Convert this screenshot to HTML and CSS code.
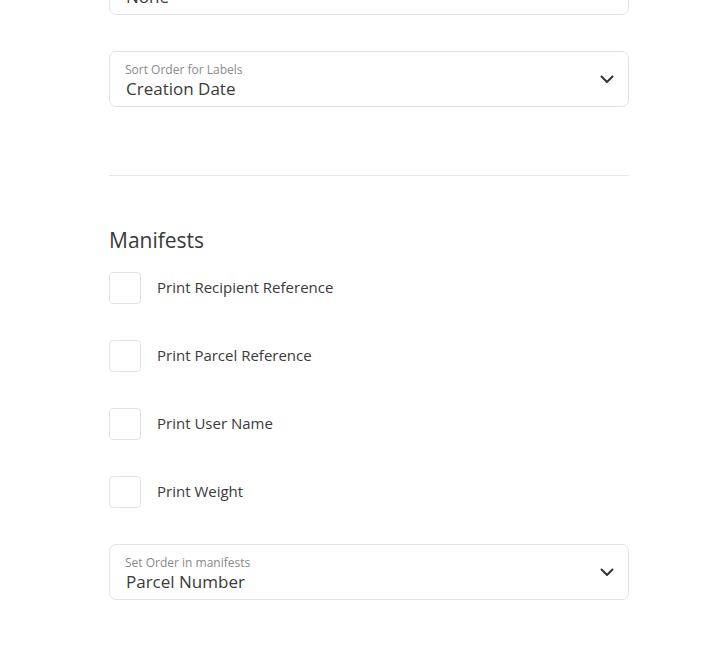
FILE: index.html
```html
<!DOCTYPE html>
<html>
<head>
<meta charset="utf-8">
<link rel="stylesheet" href="styles.css">
</head>
<body>
<div class="page">
  <div class="select select-top">
    <div class="select-text">
      <span class="select-label">Print Sequence</span>
      <span class="select-value">None</span>
    </div>
  </div>

  <div class="select select-sort">
    <div class="select-text">
      <span class="select-label">Sort Order for Labels</span>
      <span class="select-value">Creation Date</span>
    </div>
    <svg class="chevron" width="14" height="9" viewBox="0 0 14 9"><path d="M1.5 1.5 L7 7 L12.5 1.5" fill="none" stroke="#333" stroke-width="2" stroke-linecap="round" stroke-linejoin="round"/></svg>
  </div>

  <hr class="divider">

  <h2 class="section-title">Manifests</h2>

  <div class="checks">
    <label class="check-row"><span class="checkbox"></span><span class="check-text">Print Recipient Reference</span></label>
    <label class="check-row"><span class="checkbox"></span><span class="check-text">Print Parcel Reference</span></label>
    <label class="check-row"><span class="checkbox"></span><span class="check-text">Print User Name</span></label>
    <label class="check-row"><span class="checkbox"></span><span class="check-text">Print Weight</span></label>
  </div>

  <div class="select select-manifest">
    <div class="select-text">
      <span class="select-label">Set Order in manifests</span>
      <span class="select-value">Parcel Number</span>
    </div>
    <svg class="chevron" width="14" height="9" viewBox="0 0 14 9"><path d="M1.5 1.5 L7 7 L12.5 1.5" fill="none" stroke="#333" stroke-width="2" stroke-linecap="round" stroke-linejoin="round"/></svg>
  </div>
</div>
</body>
</html>
```

FILE: styles.css
```css
html, body {
  margin: 0;
  padding: 0;
  background: #ffffff;
  overflow: hidden;
}
body {
  font-family: "Open Sans", "Liberation Sans", sans-serif;
  color: #3a3a3a;
}
.page {
  width: 520px;
  margin: -41px 0 0 109px;
  display: flex;
  flex-direction: column;
}
.select {
  box-sizing: border-box;
  height: 56px;
  border: 1px solid #e3e3e3;
  border-radius: 7px;
  display: flex;
  align-items: center;
  justify-content: space-between;
  padding: 0 16px 0 16px;
}
.select-sort {
  margin-top: 36px;
}
.select-text {
  align-self: flex-start;
  display: flex;
  flex-direction: column;
  gap: 2px;
  padding-top: 11px;
}
.select-label {
  font-size: 12px;
  line-height: 13px;
  color: #8a8a8a;
  margin-left: -1px;
}
.select-value {
  font-size: 17px;
  line-height: 21px;
  color: #3a3a3a;
}
.chevron {
  display: block;
  margin-right: -2px;
}
.divider {
  margin: 68px 0 0 0;
  border: 0;
  border-top: 1px solid #e6e6e6;
  height: 0;
}
.section-title {
  margin: 52px 0 0 0;
  font-size: 21px;
  line-height: 24px;
  font-weight: 500;
  color: #3a3a3a;
}
.checks {
  display: flex;
  flex-direction: column;
  gap: 36px;
  margin-top: 20px;
}
.check-row {
  display: flex;
  align-items: center;
  gap: 16px;
}
.checkbox {
  box-sizing: border-box;
  width: 32px;
  height: 32px;
  border: 1px solid #e3e3e3;
  border-radius: 4px;
}
.check-text {
  font-size: 15px;
  line-height: 20px;
  margin-bottom: 3px;
  color: #3a3a3a;
}
.select-manifest {
  margin-top: 36px;
}
```
